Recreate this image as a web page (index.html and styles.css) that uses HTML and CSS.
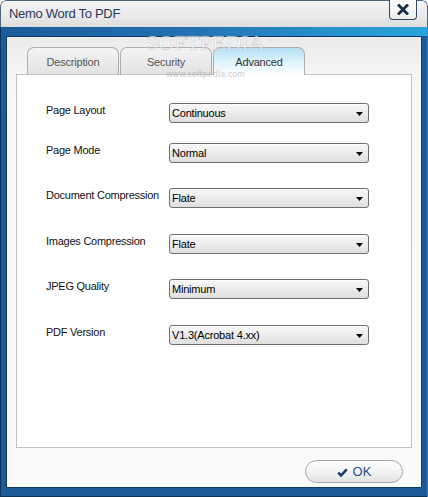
FILE: index.html
```html
<!DOCTYPE html>
<html>
<head>
<meta charset="utf-8">
<title>Nemo Word To PDF</title>
<link rel="stylesheet" href="styles.css">
</head>
<body>
<div class="window">
  <div class="titlebar">
    <span class="title">Nemo Word To PDF</span>
    <button class="close" aria-label="Close">
      <svg width="12" height="11" viewBox="0 0 12 11"><path d="M2 1.5 L10 9.5 M10 1.5 L2 9.5" stroke="#182c47" stroke-width="2.8" stroke-linecap="square" fill="none"/></svg>
    </button>
  </div>
  <div class="frame">
    <div class="panel">
      <div class="tabs">
        <div class="tab">Description</div>
        <div class="tab">Security</div>
        <div class="tab active">Advanced</div>
      </div>
      <div class="page">
        <div class="row">
          <span class="label">Page Layout</span>
          <div class="combo"><span class="value">Continuous</span><svg class="arrow" width="7" height="4" viewBox="0 0 7 4"><path d="M0 0 H7 L3.5 4 Z" fill="#000"/></svg></div>
        </div>
        <div class="row">
          <span class="label">Page Mode</span>
          <div class="combo"><span class="value">Normal</span><svg class="arrow" width="7" height="4" viewBox="0 0 7 4"><path d="M0 0 H7 L3.5 4 Z" fill="#000"/></svg></div>
        </div>
        <div class="row">
          <span class="label">Document Compression</span>
          <div class="combo"><span class="value">Flate</span><svg class="arrow" width="7" height="4" viewBox="0 0 7 4"><path d="M0 0 H7 L3.5 4 Z" fill="#000"/></svg></div>
        </div>
        <div class="row">
          <span class="label">Images Compression</span>
          <div class="combo"><span class="value">Flate</span><svg class="arrow" width="7" height="4" viewBox="0 0 7 4"><path d="M0 0 H7 L3.5 4 Z" fill="#000"/></svg></div>
        </div>
        <div class="row">
          <span class="label">JPEG Quality</span>
          <div class="combo"><span class="value">Minimum</span><svg class="arrow" width="7" height="4" viewBox="0 0 7 4"><path d="M0 0 H7 L3.5 4 Z" fill="#000"/></svg></div>
        </div>
        <div class="row">
          <span class="label">PDF Version</span>
          <div class="combo"><span class="value">V1.3(Acrobat 4.xx)</span><svg class="arrow" width="7" height="4" viewBox="0 0 7 4"><path d="M0 0 H7 L3.5 4 Z" fill="#000"/></svg></div>
        </div>
      </div>
      <div class="actions">
        <button class="ok">
          <svg width="11" height="9" viewBox="0 0 11 9"><path d="M1.2 4.6 L4 7.4 L9.8 1.4" stroke="#173d66" stroke-width="2.6" fill="none"/></svg>
          <span>OK</span>
        </button>
      </div>
      <div class="wm-big"><span>SOFTPEDIA</span><span class="tm">™</span></div>
      <div class="wm-small">www.softpedia.com</div>
    </div>
  </div>
</div>
</body>
</html>
```
FILE: styles.css
```css
* { box-sizing: border-box; }
html, body { margin: 0; padding: 0; background: #ffffff; }
body { width: 428px; height: 497px; overflow: hidden; font-family: "Liberation Sans", Arial, sans-serif; }

.window {
  width: 428px;
  height: 497px;
  display: flex;
  flex-direction: column;
  border-radius: 6px 6px 0 0;
  overflow: hidden;
}

.titlebar {
  height: 27px;
  flex: none;
  display: flex;
  align-items: flex-start;
  justify-content: space-between;
  background: linear-gradient(#f5f5f5, #e9e9e9 60%, #dedede);
  border-top: 1px solid #4b6480;
  border-left: 1px solid #4b6480;
  border-right: 1px solid #4b6480;
  border-radius: 6px 6px 0 0;
}
.title {
  padding-left: 8px;
  line-height: 26px;
  font-size: 13px;
  letter-spacing: -0.3px;
  color: #2a3b57;
}
.close {
  width: 28px;
  height: 20px;
  margin: -1px 10px 0 0;
  padding: 0;
  display: flex;
  align-items: center;
  justify-content: center;
  border: 1px solid #2e4966;
  border-top: none;
  border-radius: 0 0 4px 4px;
  background: linear-gradient(#ffffff, #ececec);
}

.frame {
  flex: 1;
  padding: 9px 6px 9px 6px;
  background-color: #1c5b98;
  background-image: linear-gradient(to right, #1b5a98 0%, #2272b5 45%, #29a6dc 100%);
  background-size: 100% 9px;
  background-repeat: no-repeat;
  box-shadow: inset 1px 0 0 #0d3358, inset -1px 0 0 #3c7fc0, inset 0 -1px 0 #0d3358;
  display: flex;
}

.panel {
  position: relative;
  flex: 1;
  display: flex;
  flex-direction: column;
  padding: 10px 9px 0 9px;
  border: 1px solid #0e3c69;
  background: linear-gradient(#ebebeb, #f8f8f8 50px, #fafafa);
}

.tabs {
  height: 27px;
  flex: none;
  display: flex;
  align-items: flex-start;
  padding-left: 11px;
}
.tab {
  width: 92px;
  height: 27px;
  margin-right: 1px;
  padding-top: 8px;
  border: 1px solid #acacac;
  border-bottom: none;
  border-radius: 7px 7px 0 0;
  background: linear-gradient(#f3f3f3, #e2e2e2);
  text-align: center;
  font-size: 11px;
  line-height: 12px;
  letter-spacing: -0.2px;
  color: #555555;
}
.tab.active {
  position: relative;
  z-index: 1;
  height: 28px;
  background: linear-gradient(#b3e1f5, #e4f5fc 60%, #ffffff);
  color: #333333;
}

.page {
  height: 374px;
  flex: none;
  background: #ffffff;
  border: 1px solid #c2c2c2;
  padding: 28px 0 0 29px;
  display: flex;
  flex-direction: column;
}
.row {
  display: flex;
  align-items: flex-start;
  height: 20px;
}
.row + .row { margin-top: 25px; }
.row:nth-child(2) { margin-top: 20px; }
.row:nth-child(4), .row:nth-child(6) { margin-top: 26px; }

.label {
  width: 123px;
  flex: none;
  font-size: 11px;
  line-height: 14px;
  letter-spacing: -0.25px;
  color: #111111;
}
.combo {
  width: 200px;
  height: 20px;
  display: flex;
  align-items: center;
  justify-content: space-between;
  padding: 0 5px 0 2px;
  border: 1px solid #6f6f6f;
  border-radius: 3px;
  background: linear-gradient(#f7f7f7, #ececec 50%, #dfdfdf);
  box-shadow: inset 0 1px 0 #ffffff;
}
.value {
  font-size: 11px;
  line-height: 14px;
  letter-spacing: -0.2px;
  color: #000000;
}
.arrow { flex: none; margin-top: 1px; }

.actions {
  flex: none;
  display: flex;
  justify-content: flex-end;
  margin: 12px 9px 0 0;
  height: 23px;
}
.ok {
  width: 98px;
  height: 23px;
  margin: 0;
  padding: 0;
  display: flex;
  align-items: center;
  justify-content: center;
  gap: 5px;
  border: 1px solid #a8a8a8;
  border-radius: 12px;
  background: linear-gradient(#ffffff, #f3f3f3 50%, #e2e2e2);
  font-family: "Liberation Sans", Arial, sans-serif;
  font-size: 13px;
  color: #1f4f80;
}
.ok svg { margin-top: 1px; }

/* watermark overlay */
.wm-big {
  position: absolute;
  left: 139px;
  top: -2px;
  height: 16px;
  display: flex;
  align-items: flex-start;
  pointer-events: none;
  z-index: 2;
  font-family: "Liberation Serif", "Times New Roman", serif;
  font-size: 22px;
  line-height: 16px;
  color: rgba(255, 255, 255, 0.6);
  -webkit-text-stroke: 0.7px rgba(185, 185, 185, 0.5);
}
.tm {
  margin: 3px 0 0 3px;
  font-family: "Liberation Sans", Arial, sans-serif;
  font-size: 6px;
  line-height: 6px;
  -webkit-text-stroke: 0;
  color: #d4d4d4;
}
.wm-small {
  position: absolute;
  left: 159px;
  top: 33px;
  pointer-events: none;
  z-index: 2;
  font-family: "DejaVu Sans Condensed", "DejaVu Sans", sans-serif;
  font-size: 9px;
  line-height: 8px;
  color: rgba(165, 165, 165, 0.6);
}
```
